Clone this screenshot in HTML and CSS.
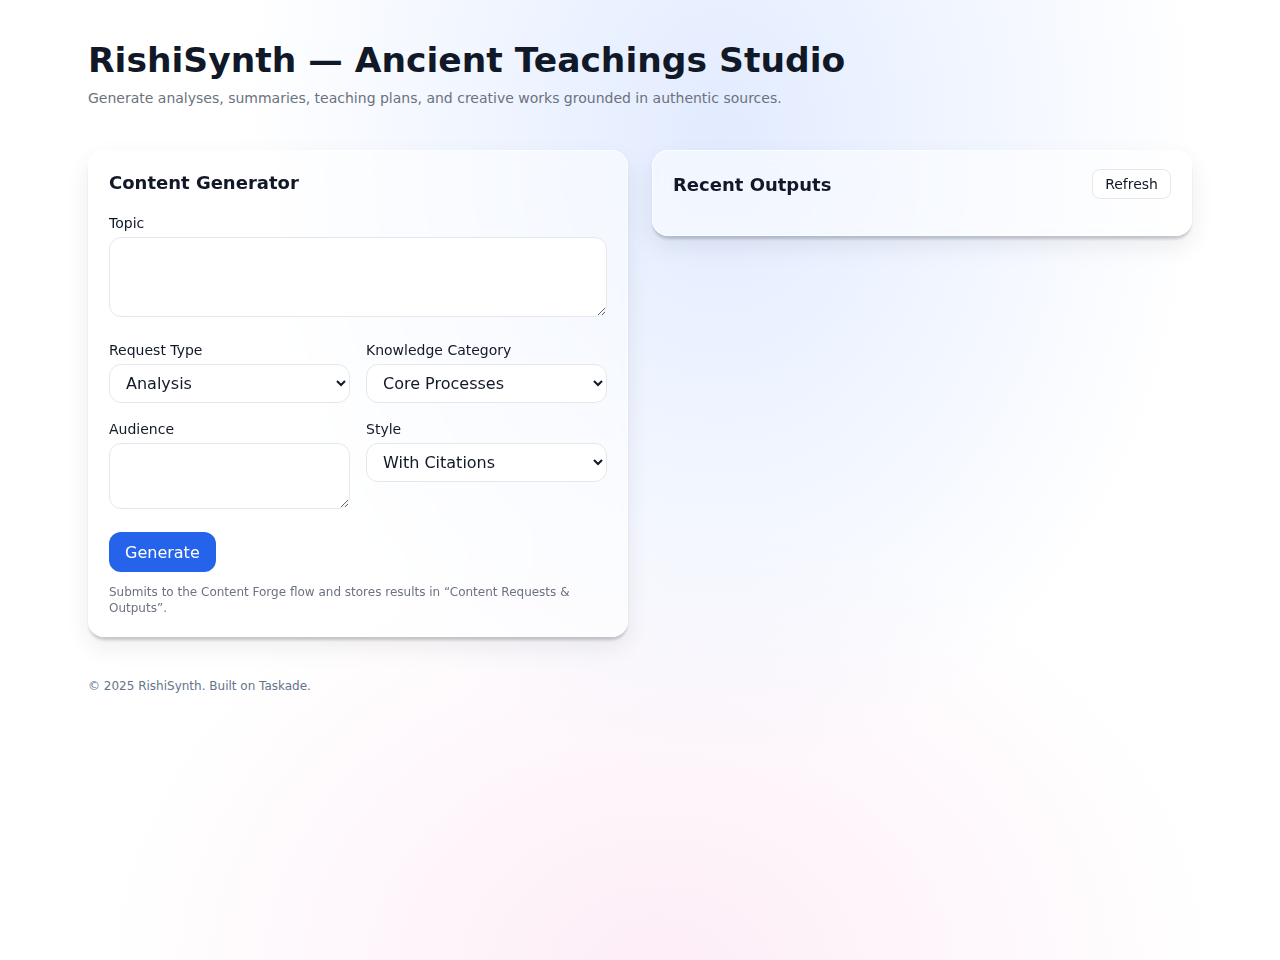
FILE: index.html
```html
<!DOCTYPE html>
<html lang="en">
<head>
    <meta charset="UTF-8">
    <title>RishiSynth — Ancient Teachings Studio</title>
    <link rel="stylesheet" href="styles.css">
</head>
<body>
    <div class="page">
        <header class="page__header">
            <h1 class="page__title">RishiSynth — Ancient Teachings Studio</h1>
            <p class="page__subtitle">Generate analyses, summaries, teaching plans, and creative works grounded in authentic sources.</p>
        </header>

        <main class="page__grid">
            <section class="card">
                <h2 class="card__title">Content Generator</h2>

                <form class="form">
                    <div class="form__field form__field--wide">
                        <label class="form__label" for="topic">Topic</label>
                        <textarea class="form__control form__control--topic" id="topic"></textarea>
                    </div>

                    <div class="form__row">
                        <div class="form__field">
                            <label class="form__label" for="type">Request Type</label>
                            <select class="form__control" id="type">
                                <option>Analysis</option>
                                <option>Summary</option>
                                <option>Teaching Plan</option>
                                <option>Creative Work</option>
                            </select>
                        </div>
                        <div class="form__field">
                            <label class="form__label" for="category">Knowledge Category</label>
                            <select class="form__control" id="category">
                                <option>Core Processes</option>
                            </select>
                        </div>
                    </div>

                    <div class="form__row">
                        <div class="form__field">
                            <label class="form__label" for="audience">Audience</label>
                            <textarea class="form__control form__control--audience" id="audience"></textarea>
                        </div>
                        <div class="form__field">
                            <label class="form__label" for="style">Style</label>
                            <select class="form__control" id="style">
                                <option>With Citations</option>
                            </select>
                        </div>
                    </div>

                    <div class="form__actions">
                        <button class="button button--primary" type="button">Generate</button>
                    </div>

                    <p class="form__note">Submits to the Content Forge flow and stores results in “Content Requests &amp; Outputs”.</p>
                </form>
            </section>

            <section class="card card--outputs">
                <div class="card__header">
                    <h2 class="card__title card__title--inline">Recent Outputs</h2>
                    <button class="button button--ghost" type="button">Refresh</button>
                </div>
                <div class="outputs"></div>
            </section>
        </main>

        <footer class="page__footer">© 2025 RishiSynth. Built on Taskade.</footer>
    </div>
</body>
</html>
```

FILE: styles.css
```css
html {
    min-height: 100%;
    background-color: #fff;
    background-image:
        radial-gradient(ellipse 480px 640px at 720px 140px, rgba(224, 234, 255, 0.95), rgba(224, 234, 255, 0) 100%),
        radial-gradient(ellipse 560px 460px at 660px 980px, rgba(253, 236, 246, 0.95), rgba(253, 236, 246, 0) 100%);
    background-repeat: no-repeat;
    font-family: "DejaVu Sans", sans-serif;
    color: #111827;
}

body {
    margin: 0;
}

.page {
    margin: 0 auto;
    max-width: 1104px;
    padding: 40px 0 40px;
}

.page__title {
    font-size: 34.5px;
    font-weight: 700;
    line-height: 1.2;
    margin: 0;
}

.page__subtitle {
    color: #6b7280;
    font-size: 14px;
    margin: 9px 0 0;
}

.page__grid {
    align-items: start;
    display: grid;
    gap: 24px;
    grid-template-columns: 1fr 1fr;
    margin-top: 44px;
}

.card {
    backdrop-filter: blur(8px);
    background: rgba(255, 255, 255, 0.5);
    border: 1px solid rgba(255, 255, 255, 0.7);
    border-radius: 16px;
    box-shadow: 0 4px 3px -1px rgba(15, 23, 42, 0.2), 0 10px 24px rgba(15, 23, 42, 0.08);
    padding: 20px;
}

.card--outputs {
    padding-top: 18px;
}

.card__title {
    font-size: 18px;
    font-weight: 700;
    margin: 1px 0 22px;
}

.card__title--inline {
    margin: 0;
}

.card__header {
    align-items: center;
    display: flex;
    justify-content: space-between;
}

.outputs {
    min-height: 16px;
}

.form__field {
    display: flex;
    flex-direction: column;
    margin-bottom: 18px;
}

.form__field--wide {
    margin-bottom: 25px;
}

.form__label {
    font-size: 14px;
    margin-bottom: 6px;
}

.form__row {
    display: grid;
    gap: 16px;
    grid-template-columns: 1fr 1fr;
}

.form__control {
    background: #fff;
    border: 1px solid #e5e7eb;
    border-radius: 12px;
    box-sizing: border-box;
    color: #111827;
    font-family: "DejaVu Sans", sans-serif;
    font-size: 16px;
    padding: 8px 12px;
    width: 100%;
}

select.form__control {
    height: 39px;
}

.form__control--topic {
    display: block;
    height: 80px;
}

.form__control--audience {
    display: block;
    height: 66px;
}

.form__actions {
    margin-top: 5px;
}

.button {
    cursor: pointer;
    font-family: "DejaVu Sans", sans-serif;
}

.button--primary {
    background: #2563eb;
    border: 0;
    border-radius: 12px;
    color: #fff;
    font-size: 16px;
    height: 40px;
    padding: 0 16px;
}

.button--ghost {
    background: #fff;
    border: 1px solid #e5e7eb;
    border-radius: 8px;
    color: #111827;
    font-size: 14px;
    height: 30px;
    padding: 0 12px;
}

.form__note {
    color: #6b7280;
    font-size: 12px;
    line-height: 16px;
    margin: 12px 0 0;
}

.page__footer {
    color: #64748b;
    font-size: 12px;
    margin-top: 42px;
}
```
